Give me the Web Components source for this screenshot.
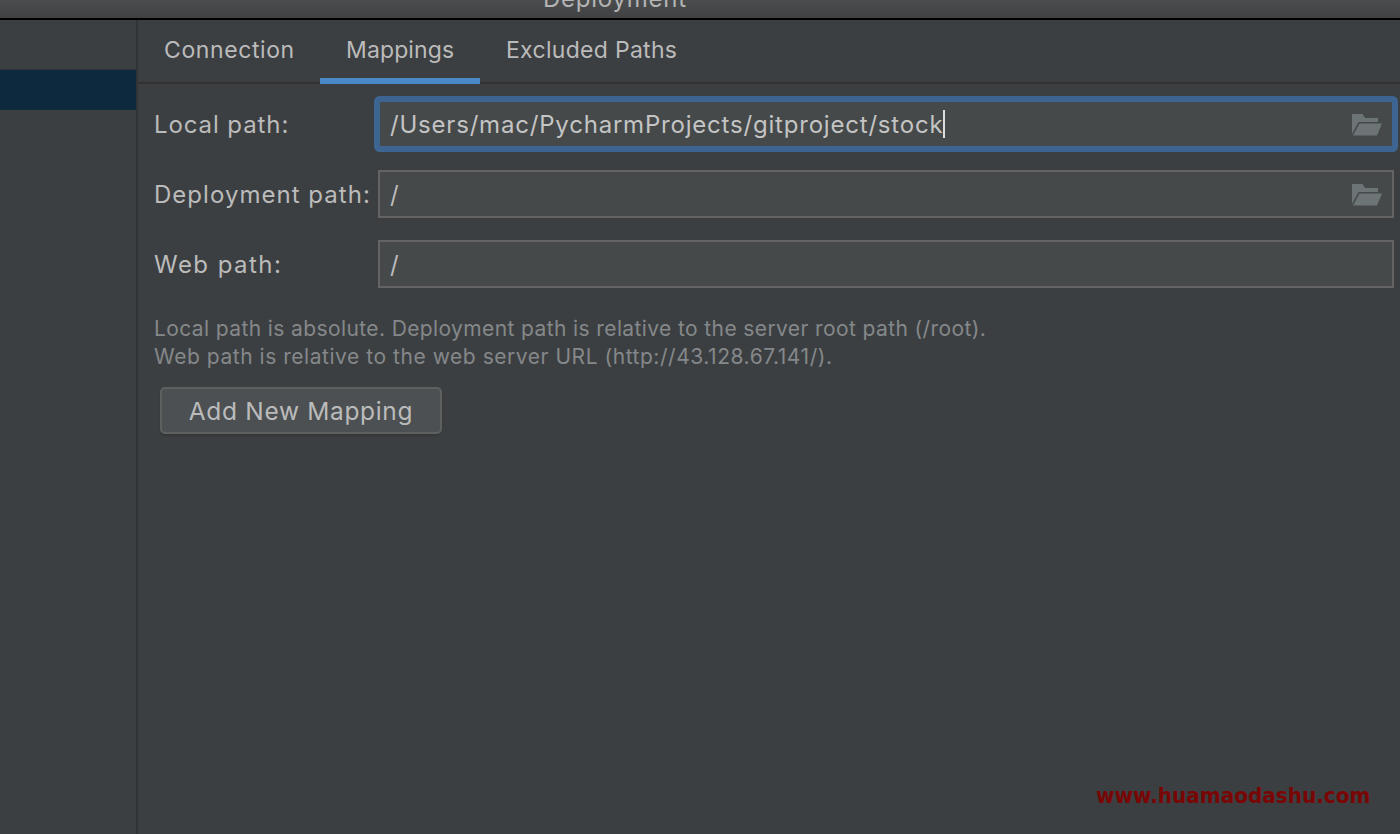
<!DOCTYPE html>
<html><head><meta charset="utf-8">
<style>
html,body{margin:0;padding:0;height:100%;overflow:hidden;background:#3c3f41}
body{font-family:Inter,Roboto,"Liberation Sans",sans-serif;color:#bbb}
</style></head><body>
<deploy-dialog></deploy-dialog>
<script>
function def(name,css,html){
  customElements.define(name,class extends HTMLElement{
    constructor(){super();const r=this.attachShadow({mode:'open'});r.innerHTML='<style>'+css+'</style>'+html;}
  });
}
const FOLDER='<svg width="30" height="22" viewBox="0 0 30 22"><path fill="#6c7476" d="M0 0H10.500L13 4H26V8H6.500L0 20Z"/><path fill="#6c7476" d="M7.500 9.500H30L25 21.500H1Z"/></svg>';
def('title-bar',`:host{display:block;box-sizing:border-box;height:20px;background:linear-gradient(#4a4c4e,#3f4143);border-bottom:2px solid #000;position:relative;overflow:hidden}
 .t{position:absolute;left:543px;top:-14px;font-size:24px;line-height:26px;letter-spacing:.75px;color:#b4b4b4;white-space:nowrap}`,`<span class="t">Deployment</span>`);
def('side-list',`:host{display:flex;flex-direction:column;box-sizing:border-box;width:138px;border-right:2px solid #313436;padding-top:49px;flex:none}
 .sel{height:41px;background:#0d293e;border-top:1px solid #323537;box-sizing:border-box}`,`<div class="sel"></div>`);
def('tab-bar',`:host{display:flex;box-sizing:border-box;height:64px;border-bottom:2px solid #323232;flex:none}
 .tab{box-sizing:border-box;height:64px;padding:16px 26px 0;font-size:23px;line-height:28px;color:#bbb;white-space:nowrap}
 .a{border-bottom:6px solid #4a88c7;width:160px;letter-spacing:.12px}
 .c{width:182px;letter-spacing:.6px}.e{letter-spacing:.3px}`,`<div class="tab c">Connection</div><div class="tab a">Mappings</div><div class="tab e">Excluded Paths</div>`);
def('path-field',`:host{display:flex;align-items:center;flex:1;box-sizing:border-box;height:48px;border:2px solid #646464;background:#45494a;padding:0 10px;position:relative;font-size:24px;letter-spacing:.8px;color:#bbb;white-space:nowrap}
 :host([focus]){border-color:#3d6592;box-shadow:0 0 0 4px #3d6592;border-radius:2px;color:#c4c4c4}
 ::slotted(svg){position:absolute;right:10px;top:12px}`,`<slot></slot>`);
def('form-row',`:host{display:flex;align-items:center;height:48px;font-size:24px;letter-spacing:.9px;color:#bbb;margin-bottom:22px}
 .l{width:224px;flex:none;white-space:nowrap}`,`<span class="l"><slot name="label"></slot></span><slot></slot>`);
def('hint-text',`:host{display:block;font-size:21px;line-height:28px;color:#85888a;white-space:nowrap;margin-top:27px}`,`<slot></slot>`);
def('push-button',`:host{display:inline-flex;align-items:center;justify-content:center;box-sizing:border-box;width:282px;height:47px;margin:16px 0 0 6px;border:2px solid #5e6060;border-radius:5px;background:#4c5052;font-size:24.500px;letter-spacing:.67px;color:#bbb;box-shadow:0 2px 2px #35383a;white-space:nowrap}`,`<slot></slot>`);
def('mappings-form',`:host{display:block;padding:16px 6px 0 16px;flex:1;min-height:0}`,`<slot></slot>`);
def('deploy-dialog',`:host{display:flex;flex-direction:column;width:1400px;height:834px;background:#3c3f41;position:relative;overflow:hidden}
 .main{display:flex;flex:1;min-height:0}.col{display:flex;flex-direction:column;flex:1;min-width:0}
 .mark{position:absolute;left:1096px;top:783px;font-family:"DejaVu Sans",sans-serif;font-weight:700;font-size:22px;line-height:26px;color:#7a0505;white-space:nowrap;transform:scaleX(.91);transform-origin:left}`,
`<title-bar></title-bar><div class="main"><side-list></side-list><div class="col"><tab-bar></tab-bar>
<mappings-form>
<form-row><span slot="label">Local path:</span><path-field focus>/Users/mac/PycharmProjects/gitproject/stock<span style="display:inline-block;width:2px;height:28px;background:#ddd"></span>${FOLDER}</path-field></form-row>
<form-row><span slot="label" style="letter-spacing:1.03px">Deployment path:</span><path-field>/${FOLDER}</path-field></form-row>
<form-row><span slot="label" style="letter-spacing:1.45px">Web path:</span><path-field>/</path-field></form-row>
<hint-text><span style="letter-spacing:.39px">Local path is absolute. Deployment path is relative to the server root path (/root).</span><br><span style="letter-spacing:.54px">Web path is relative to the web server URL (http://43.128.67.141/).</span></hint-text>
<push-button>Add New Mapping</push-button>
</mappings-form></div></div><span class="mark">www.huamaodashu.com</span>`);
</script>
</body></html>
